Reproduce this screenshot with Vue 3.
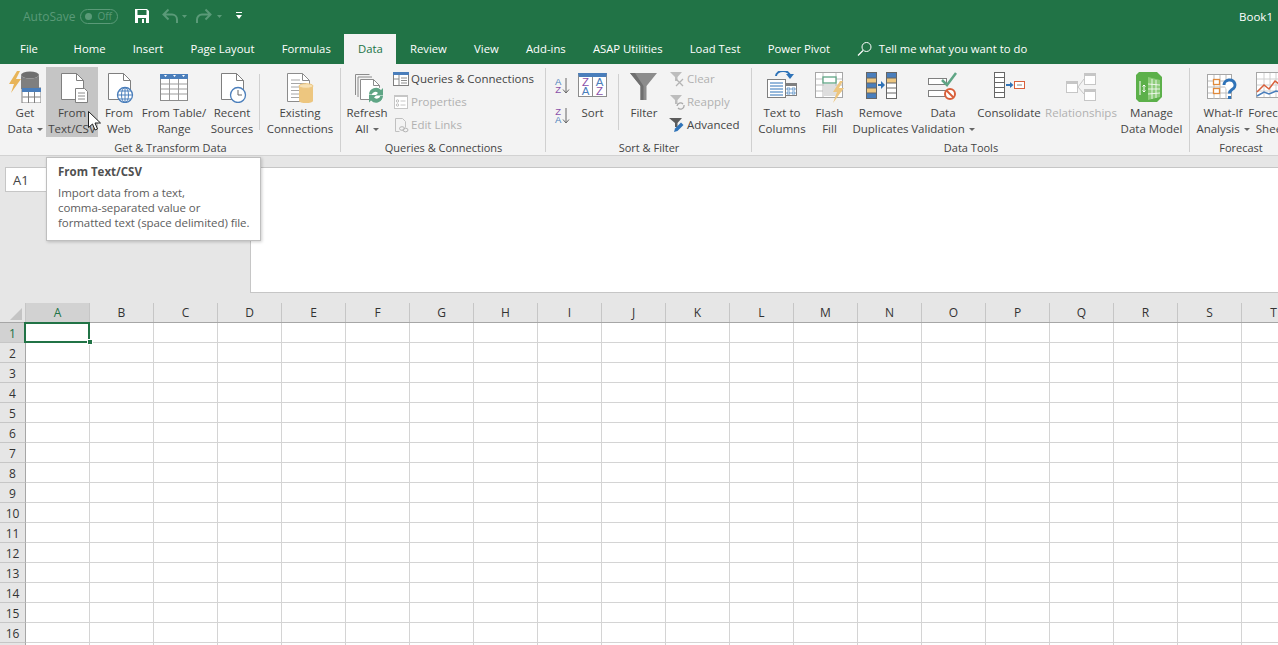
<script setup>
const tabs = ['Home', 'Insert', 'Page Layout', 'Formulas', 'Data', 'Review', 'View', 'Add-ins', 'ASAP Utilities', 'Load Test', 'Power Pivot']
const columns = 'ABCDEFGHIJKLMNOPQRST'.split('')
const rows = Array.from({ length: 17 }, (_, i) => i + 1)
</script>

<template>
  <div class="app">
    <header class="titlebar">
      <span class="autosave">AutoSave</span>
      <span class="toggle"><i class="toggle-dot"></i>Off</span>
      <svg class="qat-save" width="16" height="16" viewBox="0 0 16 16">
        <path d="M1 1h12l2 2v12H1z" fill="#fff" />
        <rect x="3.500" y="2" width="9" height="5" fill="#217346" />
        <rect x="4" y="10" width="8" height="5" fill="#217346" />
        <rect x="8" y="11" width="2" height="4" fill="#fff" />
      </svg>
      <svg class="qat-undo" width="26" height="16" viewBox="0 0 26 16" fill="none">
        <path d="M6.500 1.500 1.500 6.500l5 5M2 6.500h8a5 5 0 0 1 5 5V15" stroke="#5a9a78" stroke-width="2" />
        <path d="M20 7h5l-2.500 3z" fill="#5a9a78" />
      </svg>
      <svg class="qat-redo" width="26" height="16" viewBox="0 0 26 16" fill="none">
        <path d="M9.500 1.500l5 5-5 5M14 6.500H6a5 5 0 0 0-5 5V15" stroke="#5a9a78" stroke-width="2" />
        <path d="M21 7h5l-2.500 3z" fill="#5a9a78" />
      </svg>
      <svg class="qat-more" width="8" height="10" viewBox="0 0 8 10">
        <rect x="1" y="1" width="6" height="1" fill="#fff" />
        <path d="M1 4h6L4 8z" fill="#fff" />
      </svg>
      <span class="doc-name">Book1</span>
    </header>

    <nav class="tabs">
      <span class="tab tab-file">File</span>
      <span v-for="tab in tabs" :key="tab" class="tab" :class="{ active: tab === 'Data' }">{{ tab }}</span>
      <svg class="tell-icon" width="16" height="16" viewBox="0 0 16 16" fill="none">
        <circle cx="9.500" cy="6" r="4.500" stroke="#fff" />
        <path d="M6 9.500 1 14.500" stroke="#fff" stroke-width="1.200" />
      </svg>
      <span class="tell">Tell me what you want to do</span>
    </nav>

    <section class="ribbon">
      <!-- Get & Transform Data -->
      <div class="group group-get">
        <div class="items">
          <div class="btn w-get">
            <svg class="big" viewBox="0 0 32 32">
              <path d="M8 0 0 13h5L2 22 12 8H7l4-8z" fill="#e8b458" />
              <ellipse cx="21" cy="4" rx="9" ry="3.500" fill="#6f6f6f" />
              <path d="M12 4v14h18V4a9 3.500 0 0 1-18 0z" fill="#7f7f7f" />
              <rect x="13" y="17" width="19" height="15" fill="#fff" stroke="#7f7f7f" />
              <rect x="13" y="17" width="19" height="4" fill="#4a7ebb" />
              <path d="M13.500 26h18M19.500 21v11M25.500 21v11" stroke="#7f7f7f" fill="none" />
            </svg>
            <span>Get</span><span>Data <i class="caret"></i></span>
          </div>
          <div class="btn w-text hovered">
            <svg class="big" viewBox="0 0 32 32" fill="none">
              <path d="M5.500 2.500h15l7 7v19h-22z" fill="#fff" stroke="#7f7f7f" />
              <path d="M20.500 2.500v7h7" stroke="#7f7f7f" />
              <path d="M19.500 17.500h9l3 3v11h-12z" fill="#fff" stroke="#7f7f7f" />
              <path d="M22 22h7M22 25h7M22 28h7" stroke="#8c8c8c" />
            </svg>
            <span>From</span><span>Text/CSV</span>
          </div>
          <div class="btn w-web">
            <svg class="big" viewBox="0 0 32 32" fill="none">
              <path d="M5.500 2.500h15l7 7v19h-22z" fill="#fff" stroke="#7f7f7f" />
              <path d="M20.500 2.500v7h7" stroke="#7f7f7f" />
              <circle cx="22" cy="24" r="7.500" fill="#fff" stroke="#4a7ebb" stroke-width="1.300" />
              <ellipse cx="22" cy="24" rx="3.500" ry="7.500" stroke="#4a7ebb" />
              <path d="M14.500 24h15M16 20h12M16 28h12M22 16.500v15" stroke="#4a7ebb" />
            </svg>
            <span>From</span><span>Web</span>
          </div>
          <div class="btn w-table">
            <svg class="big" viewBox="0 0 32 32" fill="none">
              <rect x="2.500" y="4.500" width="27" height="25" fill="#fff" stroke="#8c8c8c" />
              <rect x="2" y="3" width="28" height="5" fill="#4a7ebb" />
              <path d="M3 13h26M3 18h26M3 23h26M11.500 8v21M20.500 8v21" stroke="#9b9b9b" />
              <path d="M6 4h3l-1.500 2zM15 4h3l-1.500 2zM24 4h3l-1.500 2z" fill="#fff" />
            </svg>
            <span>From Table/</span><span>Range</span>
          </div>
          <div class="btn w-recent">
            <svg class="big" viewBox="0 0 32 32" fill="none">
              <path d="M5.500 2.500h15l7 7v19h-22z" fill="#fff" stroke="#7f7f7f" />
              <path d="M20.500 2.500v7h7" stroke="#7f7f7f" />
              <circle cx="22" cy="24" r="7.500" fill="#fff" stroke="#4a7ebb" stroke-width="1.300" />
              <path d="M22 19v5h4" stroke="#666" />
            </svg>
            <span>Recent</span><span>Sources</span>
          </div>
          <i class="sep sep-get"></i>
          <div class="btn w-existing">
            <svg class="big" viewBox="0 0 32 32" fill="none">
              <path d="M3.500 2.500h15l7 7v21h-22z" fill="#fff" stroke="#8c8c8c" />
              <path d="M18.500 2.500v7h7" stroke="#8c8c8c" />
              <path d="M7 9h9M7 12.500h15M7 16h15M7 19.500h9M7 23h9M7 26.500h9" stroke="#a6a6a6" />
              <path d="M15 15v15a6.500 2 0 0 0 14 0V15z" fill="#edc67f" />
              <ellipse cx="22" cy="15" rx="7" ry="2.300" fill="#f6e1b6" stroke="#edc67f" />
            </svg>
            <span>Existing</span><span>Connections</span>
          </div>
        </div>
        <div class="group-label">Get &amp; Transform Data</div>
      </div>

      <!-- Queries & Connections -->
      <div class="group group-queries">
        <div class="items">
          <div class="btn w-refresh">
            <svg class="big" viewBox="0 0 32 32" fill="none">
              <path d="M4.500 24V3.500h14" stroke="#8c8c8c" />
              <path d="M7 26V6h14" stroke="#8c8c8c" />
              <path d="M9.500 8.500h13l6 6v14h-19z" fill="#fff" stroke="#8c8c8c" />
              <path d="M22.500 8.500v6h6" stroke="#8c8c8c" />
              <circle cx="25" cy="24" r="8" fill="#fff" />
              <path d="M18 23.500a7 7 0 0 1 12-4.500l2-2v7.500h-7.500l2.500-2.500a3.800 3.800 0 0 0-6.300 1.500z" fill="#5fa585" />
              <path d="M32 25a7 7 0 0 1-12 4.500l-2 2V24h7.500L23 26.500a3.800 3.800 0 0 0 6.300-1.500z" fill="#5fa585" />
            </svg>
            <span>Refresh</span><span>All <i class="caret"></i></span>
          </div>
          <div class="small-col col-queries">
            <div class="small">
              <svg class="ico" viewBox="0 0 16 16" fill="none">
                <rect x="0.500" y="1.500" width="15" height="13" fill="#fff" stroke="#7f7f7f" />
                <rect x="0" y="1" width="16" height="3" fill="#4a7ebb" />
                <path d="M1 8h5M6 4v10M8 7h6M8 9.500h6M8 12h6" stroke="#8c8c8c" />
              </svg>
              Queries &amp; Connections
            </div>
            <div class="small disabled">
              <svg class="ico" viewBox="0 0 16 16" fill="none">
                <rect x="1.500" y="1.500" width="13" height="13" fill="#fff" stroke="#c6c6c6" />
                <rect x="1" y="1" width="14" height="2" fill="#c6c6c6" />
                <circle cx="4.500" cy="7" r="1.200" stroke="#bcbcbc" />
                <circle cx="4.500" cy="11" r="1.200" stroke="#bcbcbc" />
                <path d="M7.500 7h5M7.500 11h5" stroke="#c6c6c6" />
              </svg>
              Properties
            </div>
            <div class="small disabled">
              <svg class="ico" viewBox="0 0 16 16" fill="none">
                <path d="M2.500 1.500h7l3 3v6M2.500 1.500v13h4" stroke="#c0c0c0" />
                <ellipse cx="9" cy="11.500" rx="2.500" ry="1.800" stroke="#b4b4b4" />
                <ellipse cx="12.500" cy="13" rx="2.500" ry="1.800" stroke="#b4b4b4" />
              </svg>
              Edit Links
            </div>
          </div>
        </div>
        <div class="group-label">Queries &amp; Connections</div>
      </div>

      <!-- Sort & Filter -->
      <div class="group group-sort">
        <div class="items">
          <div class="small-col col-az">
            <div class="az">
              <span class="az-letters"><b class="blue">A</b><b class="purple">Z</b></span>
              <svg class="az-arrow" viewBox="0 0 8 16" fill="none"><path d="M4 0v15M1 11.500l3 3.500 3-3.500" stroke="#666" /></svg>
            </div>
            <div class="az">
              <span class="az-letters"><b class="purple">Z</b><b class="blue">A</b></span>
              <svg class="az-arrow" viewBox="0 0 8 16" fill="none"><path d="M4 0v15M1 11.500l3 3.500 3-3.500" stroke="#666" /></svg>
            </div>
          </div>
          <div class="btn w-sort">
            <div class="sort-icon">
              <span class="sort-col"><b class="purple">Z</b><b class="blue">A</b></span>
              <span class="sort-col"><b class="blue">A</b><b class="purple">Z</b></span>
            </div>
            <span>Sort</span><span>&nbsp;</span>
          </div>
          <i class="sep sep-sort"></i>
          <div class="btn w-filter">
            <svg class="big" viewBox="0 0 32 32">
              <path d="M2 2h27L18.500 15v14h-6V15z" fill="#8c8c8c" />
              <path d="M12.500 15 2 2h5l8.500 13v14h-3z" fill="#6f6f6f" />
            </svg>
            <span>Filter</span><span>&nbsp;</span>
          </div>
          <div class="small-col col-filter">
            <div class="small disabled">
              <svg class="ico" viewBox="0 0 16 16" fill="none">
                <path d="M1 1h12L8.500 6v4H6V6z" fill="#bdbdbd" />
                <path d="M7 8l7 7M14 8l-7 7" stroke="#b4b4b4" stroke-width="1.300" />
              </svg>
              Clear
            </div>
            <div class="small disabled">
              <svg class="ico" viewBox="0 0 16 16" fill="none">
                <path d="M1 1h12L8.500 6v4H6V6z" fill="#bdbdbd" />
                <path d="M8 12a3.500 3.500 0 0 1 6-2M15 11a3.500 3.500 0 0 1-6 3" stroke="#a9a9a9" stroke-width="1.300" />
              </svg>
              Reapply
            </div>
            <div class="small">
              <svg class="ico" viewBox="0 0 16 16" fill="none">
                <path d="M0 1h13L8.500 6v4H6V6z" fill="#5c5c5c" />
                <path d="M5 15l1-3.500 6-6 2.500 2.500-6 6z" fill="#2f73b8" />
              </svg>
              Advanced
            </div>
          </div>
        </div>
        <div class="group-label">Sort &amp; Filter</div>
      </div>

      <!-- Data Tools -->
      <div class="group group-tools">
        <div class="items">
          <div class="btn w-ttc">
            <svg class="big" viewBox="0 0 32 32" fill="none">
              <g transform="translate(0 -3)">
                <path d="M10 8a7 5 0 0 1 14 0" stroke="#2f73b8" stroke-width="2" />
                <path d="M20 6h8l-4 5z" fill="#2f73b8" />
                <rect x="1.500" y="11.500" width="18" height="18" fill="#fff" stroke="#7f7f7f" />
                <path d="M4 15h13M4 18h13M4 21h13M4 24h13M4 27h13" stroke="#2f73b8" />
                <rect x="19.500" y="15.500" width="11" height="12" fill="#fff" stroke="#7f7f7f" />
                <rect x="19" y="15" width="12" height="3" fill="#7f7f7f" />
                <path d="M21 20h3v2h-3zM26 20h3v2h-3zM21 24h3v2h-3zM26 24h3v2h-3z" stroke="#2f73b8" stroke-width=".7" />
              </g>
            </svg>
            <span>Text to</span><span>Columns</span>
          </div>
          <div class="btn w-flash">
            <svg class="big" viewBox="0 0 32 32" fill="none">
              <rect x="1.500" y="1.500" width="27" height="25" fill="#fff" stroke="#a6a6a6" />
              <path d="M2 8h26M2 14h26M2 20h26M9 2v24M22 2v24" stroke="#bdbdbd" />
              <rect x="9" y="6" width="13" height="6" fill="#fff" stroke="#5fa585" stroke-width="1.300" />
              <rect x="9" y="15" width="13" height="10" fill="#dedede" />
              <path d="M26 10 19 21h4l-4 11 11-15h-5l4-7z" fill="#edc67f" />
            </svg>
            <span>Flash</span><span>Fill</span>
          </div>
          <div class="btn w-dup">
            <svg class="big" viewBox="0 0 32 32" fill="none">
              <g transform="translate(0 1)">
                <rect x="1.500" y="0.500" width="10" height="26" fill="#4a7ebb" stroke="#666" />
                <rect x="2" y="6" width="9" height="5" fill="#edc67f" />
                <rect x="2" y="16" width="9" height="5" fill="#edc67f" />
                <path d="M2 6h9M2 11h9M2 16h9M2 21h9" stroke="#666" />
                <rect x="21.500" y="0.500" width="10" height="26" fill="#fff" stroke="#666" />
                <rect x="22" y="1" width="9" height="5" fill="#4a7ebb" />
                <rect x="22" y="6" width="9" height="5" fill="#edc67f" />
                <path d="M22 6h9M22 11h9M22 16h9M22 21h9" stroke="#666" />
                <path d="M13 13h4" stroke="#2f73b8" stroke-width="2" />
                <path d="M16 9l4 4-4 4z" fill="#2f73b8" />
              </g>
            </svg>
            <span>Remove</span><span>Duplicates</span>
          </div>
          <div class="btn w-val">
            <svg class="big" viewBox="0 0 32 32" fill="none">
              <rect x="1.500" y="7.500" width="18" height="6" fill="#fff" stroke="#7f7f7f" />
              <rect x="1.500" y="19.500" width="18" height="6" fill="#fff" stroke="#7f7f7f" />
              <path d="M15 9l5 5 9-12" stroke="#5fa585" stroke-width="2.500" />
              <circle cx="23" cy="23" r="5" fill="#fff" stroke="#d9603b" stroke-width="2" />
              <path d="M19.500 19.500l7 7" stroke="#d9603b" stroke-width="2" />
            </svg>
            <span>Data</span><span>Validation <i class="caret"></i></span>
          </div>
          <div class="btn w-cons">
            <svg class="big" viewBox="0 0 32 32" fill="none">
              <rect x="1.500" y="1.500" width="10" height="25" fill="#fff" stroke="#666" />
              <path d="M2 6.500h9M2 11.500h9M2 16.500h9M2 21.500h9" stroke="#666" />
              <path d="M13 14h5" stroke="#2f73b8" stroke-width="2" />
              <path d="M17 11l3.500 3-3.500 3z" fill="#2f73b8" />
              <rect x="21.500" y="10.500" width="10" height="7" fill="#fff" stroke="#d9603b" />
              <path d="M24 14h5" stroke="#888" />
            </svg>
            <span>Consolidate</span><span>&nbsp;</span>
          </div>
          <div class="btn w-rel disabled">
            <svg class="big" viewBox="0 0 32 32" fill="none">
              <rect x="1.500" y="10.500" width="11" height="11" fill="#fff" stroke="#c6c6c6" />
              <rect x="1" y="10" width="12" height="3" fill="#c6c6c6" />
              <rect x="19.500" y="2.500" width="11" height="11" fill="#fff" stroke="#c6c6c6" />
              <rect x="19" y="2" width="12" height="3" fill="#c6c6c6" />
              <rect x="19.500" y="18.500" width="11" height="11" fill="#fff" stroke="#c6c6c6" />
              <rect x="19" y="18" width="12" height="3" fill="#c6c6c6" />
              <path d="M13 16l6-8M13 16l6 7" stroke="#c6c6c6" />
            </svg>
            <span>Relationships</span><span>&nbsp;</span>
          </div>
          <div class="btn w-model">
            <svg class="big" viewBox="0 0 32 32" fill="none">
              <g transform="translate(-4 0)">
                <path d="M7 1h18l5 5v20l-5 5H7l-5-5V6z" fill="#5cb04a" />
                <path d="M16 6l12 3v17l-12 3z" fill="#8dcc7a" />
                <path d="M20 8v20M24 9v18M16 13l12 1M16 18h12M16 23l12-1" stroke="#fff" stroke-width=".8" />
                <path d="M8 10v14" stroke="#fff" />
                <path d="M12 14v7M10.500 15.500 12 14l1.500 1.500M10.500 19.500 12 21l1.500-1.500" stroke="#fff" />
              </g>
            </svg>
            <span>Manage</span><span>Data Model</span>
          </div>
        </div>
        <div class="group-label">Data Tools</div>
      </div>

      <!-- Forecast -->
      <div class="group group-forecast">
        <div class="items">
          <div class="btn w-whatif">
            <svg class="big" viewBox="0 0 32 32" fill="none">
              <g transform="translate(-2 2)">
                <rect x="2.500" y="1.500" width="24" height="24" fill="#fff" stroke="#a6a6a6" />
                <path d="M3 8h23M3 14h23M3 20h23M9 2v24M15 2v24M21 2v24" stroke="#bdbdbd" />
                <rect x="8.500" y="6.500" width="6" height="5" fill="#fff" stroke="#e08a3c" stroke-width="1.300" />
                <rect x="8.500" y="15.500" width="6" height="5" fill="#fff" stroke="#e08a3c" stroke-width="1.300" />
                <path d="M19 12a5.500 5 0 1 1 8 4.500c-1.500 1-2.500 2-2.500 4" stroke="#2f73b8" stroke-width="3" fill="#fff" />
                <rect x="23" y="23" width="3" height="3" fill="#2f73b8" />
              </g>
            </svg>
            <span>What-If</span><span>Analysis <i class="caret"></i></span>
          </div>
          <div class="btn w-sheet">
            <svg class="big" viewBox="0 0 32 32" fill="none">
              <rect x="1.500" y="1.500" width="26" height="25" fill="#fff" stroke="#a6a6a6" />
              <path d="M2 8h26M2 14h26M2 20h26M9 2v24M15 2v24M21 2v24" stroke="#d0d0d0" />
              <path d="M2 21l7-7 5 4 6-8 8 6" stroke="#d9603b" stroke-width="1.500" />
              <path d="M2 25l7-4 5 2 7-3 7 2" stroke="#4a7ebb" stroke-width="1.500" />
            </svg>
            <span>Forecast</span><span>Sheet</span>
          </div>
        </div>
        <div class="group-label">Forecast</div>
      </div>
    </section>

    <section class="formula-area">
      <div class="name-box">A1</div>
      <div class="formula-input"></div>
    </section>

    <section class="sheet">
      <div class="head-row">
        <div class="corner"><i class="corner-mark"></i></div>
        <div v-for="col in columns" :key="col" class="col-head" :class="{ selected: col === 'A' }">{{ col }}</div>
      </div>
      <div v-for="row in rows" :key="row" class="row">
        <div class="row-head" :class="{ selected: row === 1 }">{{ row < 17 ? row : '' }}</div>
        <div
          v-for="col in columns"
          :key="col"
          class="cell"
          :class="{ current: row === 1 && col === 'A' }"
        ></div>
      </div>
    </section>

    <div class="tooltip">
      <div class="tooltip-title">From Text/CSV</div>
      <p class="tooltip-body">Import data from a text,<br />comma-separated value or<br />formatted text (space delimited) file.</p>
    </div>

    <svg class="cursor" width="13" height="21" viewBox="0 0 13 21">
      <path d="M.5.500v16l4-3.500 2.500 6 2.500-1-2.500-6h5.500z" fill="#fff" stroke="#222" />
    </svg>
  </div>
</template>

<style>
html,
body {
  margin: 0;
  overflow: hidden;
}
</style>

<style scoped>
.app {
  position: relative;
  width: 1278px;
  height: 645px;
  overflow: hidden;
  background: #e6e6e6;
  font-family: "Open Sans", "Noto Sans", sans-serif;
  font-size: 11.500px;
  color: #444;
}

/* title bar */
.titlebar {
  display: flex;
  align-items: center;
  box-sizing: border-box;
  height: 34px;
  padding: 0 0 2px 23px;
  background: #217346;
  color: #fff;
}
.autosave {
  width: 57px;
  color: #5a9a78;
  font-size: 12px;
}
.toggle {
  display: flex;
  align-items: center;
  justify-content: flex-end;
  box-sizing: border-box;
  width: 38px;
  height: 15px;
  padding: 0 5px 0 4px;
  border: 1px solid #5a9a78;
  border-radius: 8px;
  color: #5a9a78;
  font-size: 10px;
}
.toggle-dot {
  width: 7px;
  height: 7px;
  margin-right: auto;
  border-radius: 50%;
  background: #5a9a78;
}
.qat-save { margin-left: 16px; }
.qat-undo { margin-left: 12px; }
.qat-redo { margin-left: 8px; }
.qat-more { margin-left: 13px; }
.doc-name {
  margin-left: auto;
  margin-right: 5px;
}

/* tabs */
.tabs {
  display: flex;
  align-items: stretch;
  height: 30px;
  background: #217346;
  color: #fff;
  font-size: 11.300px;
  line-height: 30px;
}
.tab {
  padding: 0 13.600px;
  white-space: nowrap;
}
.tab-file {
  width: 58px;
  padding: 0;
  text-align: center;
  margin-right: 2px;
}
.tab.active {
  background: #f3f3f3;
  color: #217346;
}
.tell-icon {
  align-self: center;
  margin-left: 13px;
}
.tell { margin-left: 6px; }

/* ribbon */
.ribbon {
  display: flex;
  height: 91px;
  background: #f3f3f3;
  border-bottom: 1px solid #d2d2d2;
  overflow: hidden;
}
.group {
  position: relative;
  flex: none;
  box-sizing: border-box;
  display: flex;
  flex-direction: column;
  padding-top: 3px;
}
.group::after {
  content: "";
  position: absolute;
  top: 4px;
  right: 0;
  bottom: 3px;
  width: 1px;
  background: #d0d0d0;
}
.items {
  display: flex;
  height: 70px;
}
.group-label {
  margin-top: 3px;
  text-align: center;
  font-size: 11px;
  line-height: 16px;
  white-space: nowrap;
}
.group-get { width: 341px; }
.group-get .items { padding-left: 4px; }
.group-queries { width: 205px; }
.group-queries .items { padding-left: 6px; }
.group-sort { width: 206px; }
.group-sort .items { padding-left: 6px; }
.group-tools { width: 438px; }
.group-tools .items { padding-left: 4px; }
.group-forecast { width: 102px; }
.group-forecast .items { padding-left: 6px; }
.group-forecast::after { display: none; }

.btn {
  flex: none;
  display: flex;
  flex-direction: column;
  align-items: center;
  line-height: 16px;
  white-space: nowrap;
}
.btn.hovered { background: #c5c5c5; }
.btn.disabled,
.small.disabled { color: #b1b1b1; }
.big {
  display: block;
  flex: none;
  width: 32px;
  height: 32px;
  margin: 4px 0 2px;
}
.caret {
  display: inline-block;
  width: 0;
  height: 0;
  margin-left: 1px;
  vertical-align: 2px;
  border: 3px solid transparent;
  border-top-color: #666;
  border-bottom: 0;
}
.sep {
  flex: none;
  width: 1px;
  height: 56px;
  margin-top: 7px;
  background: #d0d0d0;
}
.sep-get { margin-left: 3px; margin-right: 2px; }
.sep-sort { margin-left: 8px; margin-right: 6px; }

.w-get { width: 42px; }
.w-text { width: 52px; }
.w-web { width: 42px; }
.w-table { width: 68px; }
.w-recent { width: 48px; }
.w-existing { width: 76px; }
.w-refresh { width: 40px; }
.w-sort { width: 35px; }
.w-filter { width: 38px; }
.w-ttc { width: 52px; }
.w-flash { width: 43px; }
.w-dup { width: 59px; }
.w-val { width: 66px; }
.w-cons { width: 66px; }
.w-rel { width: 78px; }
.w-model { width: 63px; }
.w-whatif { width: 54px; }
.w-sheet { width: 42px; }

.small-col {
  display: flex;
  flex-direction: column;
}
.col-queries { margin-left: 6px; }
.col-filter { margin-left: 6px; }
.col-az {
  box-sizing: border-box;
  width: 23px;
  padding: 11px 0 0 3px;
  gap: 14px;
}
.small {
  display: flex;
  align-items: center;
  height: 23px;
  white-space: nowrap;
}
.ico {
  flex: none;
  width: 16px;
  height: 16px;
  margin-right: 2px;
}

/* sort glyphs: real letters stacked tightly */
.az {
  display: flex;
  gap: 1px;
  height: 16px;
}
.az-letters,
.sort-col {
  display: flex;
  flex-direction: column;
  align-items: center;
  font-family: "Liberation Sans", sans-serif;
}
.az-letters b {
  display: block;
  height: 8px;
  font-size: 9.500px;
  font-weight: 400;
  line-height: 8px;
}
.az-arrow {
  flex: none;
  width: 8px;
  height: 16px;
}
.sort-icon {
  display: flex;
  flex: none;
  box-sizing: border-box;
  width: 29px;
  height: 24px;
  margin: 6px 0 8px;
  background: #fff;
  border: 1px solid #8c8c8c;
  border-top: 4px solid #4a7ebb;
}
.sort-col {
  flex: 1;
  padding-top: 1px;
}
.sort-col + .sort-col { border-left: 1px solid #8c8c8c; }
.sort-col b {
  display: block;
  height: 9px;
  font-size: 11.500px;
  font-weight: 400;
  line-height: 9px;
}
.blue { color: #4a7ebb; }
.purple { color: #8a4fa8; }

/* formula area */
.formula-area {
  display: flex;
  align-items: flex-start;
  box-sizing: border-box;
  height: 147px;
  padding-top: 11px;
}
.name-box {
  box-sizing: border-box;
  width: 125px;
  height: 25px;
  margin-left: 5px;
  padding-left: 7px;
  background: #fff;
  border: 1px solid #c6c6c6;
  font-size: 13px;
  line-height: 25px;
}
.formula-input {
  box-sizing: border-box;
  width: 1028px;
  height: 126px;
  margin-left: auto;
  background: #fff;
  border-left: 1px solid #c6c6c6;
  border-top: 1px solid #c6c6c6;
  border-bottom: 1px solid #c6c6c6;
}

/* sheet */
.sheet {
  background: #fff;
  overflow: hidden;
  height: 342px;
  font-size: 12px;
}
.head-row {
  display: flex;
  box-sizing: border-box;
  height: 20px;
  background: #e6e6e6;
  border-bottom: 1px solid #a6a6a6;
  color: #333;
}
.corner {
  position: relative;
  flex: none;
  box-sizing: border-box;
  width: 26px;
  border-right: 1px solid #c6c6c6;
}
.corner-mark {
  position: absolute;
  right: 3px;
  bottom: 2px;
  border-style: solid;
  border-width: 0 0 12px 12px;
  border-color: transparent transparent #c4c4c4 transparent;
}
.col-head {
  flex: none;
  box-sizing: border-box;
  width: 64px;
  border-right: 1px solid #c6c6c6;
  text-align: center;
  line-height: 19px;
}
.col-head.selected {
  background: #d2d2d2;
  color: #217346;
}
.row {
  display: flex;
  height: 20px;
}
.row-head {
  flex: none;
  box-sizing: border-box;
  width: 26px;
  padding-top: 1px;
  background: #e6e6e6;
  border-right: 1px solid #a6a6a6;
  border-bottom: 1px solid #c6c6c6;
  text-align: center;
  color: #333;
  line-height: 20px;
}
.row-head.selected {
  background: #d2d2d2;
  color: #217346;
}
.cell {
  flex: none;
  position: relative;
  box-sizing: border-box;
  width: 64px;
  border-right: 1px solid #d4d4d4;
  border-bottom: 1px solid #d4d4d4;
}
.cell.current::before {
  content: "";
  position: absolute;
  top: -1px;
  left: -2px;
  width: 66px;
  height: 21px;
  box-sizing: border-box;
  border: 2px solid #217346;
}
.cell.current::after {
  content: "";
  position: absolute;
  right: -4px;
  bottom: -3px;
  width: 4px;
  height: 4px;
  background: #217346;
  border: 1px solid #fff;
  z-index: 1;
}

/* overlays */
.tooltip {
  position: absolute;
  left: 46px;
  top: 157px;
  box-sizing: border-box;
  width: 215px;
  height: 84px;
  padding: 6px 11px;
  background: #fff;
  border: 1px solid #bfbfbf;
  box-shadow: 1px 1px 3px rgba(0, 0, 0, 0.2);
  color: #5d5d5d;
  white-space: nowrap;
}
.tooltip-title {
  font-weight: 700;
  line-height: 16px;
  color: #505050;
}
.tooltip-body {
  margin: 5px 0 0;
  line-height: 15px;
  letter-spacing: -0.070px;
}
.cursor {
  position: absolute;
  left: 88px;
  top: 111px;
}
</style>
